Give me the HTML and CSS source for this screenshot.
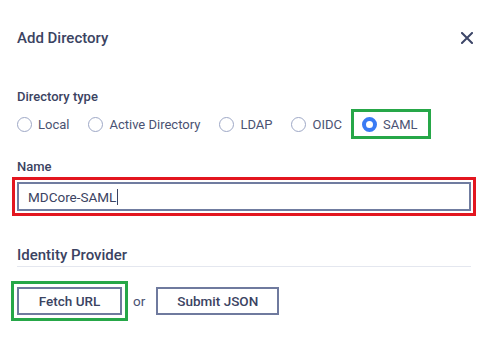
FILE: index.html
```html
<!DOCTYPE html>
<html>
  <head>
    <title>Add Directory</title>
    <link rel="stylesheet" href="styles.css">
  </head>

  <body>
    <div class="dialog">
      <div class="dialog-header">
        <h1 class="dialog-title">Add Directory</h1>
        <button class="close-button" title="Close">
          <svg width="12" height="12" viewBox="0 0 12 12">
            <path d="M1 1 L11 11 M11 1 L1 11" stroke="#3d4668" stroke-width="2" stroke-linecap="square"/>
          </svg>
        </button>
      </div>

      <div class="field-label type-label">Directory type</div>
      <div class="radio-row">
        <label class="radio"><span class="radio-dot"></span>Local</label>
        <label class="radio"><span class="radio-dot"></span>Active Directory</label>
        <label class="radio"><span class="radio-dot"></span>LDAP</label>
        <label class="radio"><span class="radio-dot"></span>OIDC</label>
        <label class="radio radio-selected"><span class="radio-dot checked"></span>SAML</label>
      </div>

      <div class="field-label name-label">Name</div>
      <div class="text-field"><span>MDCore-SAML</span><span class="caret"></span></div>

      <h2 class="section-title">Identity Provider</h2>

      <div class="provider-actions">
        <button class="outline-button fetch-button">Fetch URL</button>
        <span class="or">or</span>
        <button class="outline-button json-button">Submit JSON</button>
      </div>
    </div>
  </body>
</html>
```

FILE: styles.css
```css
* {
  box-sizing: border-box;
}

body {
  margin: 0;
  min-height: 100vh;
  background: #ffffff;
  color: #3b4362;
  font-family: Roboto, 'Liberation Sans', sans-serif;
}

.dialog {
  padding: 28px 14px 24px 17px;
}

.dialog-header {
  display: flex;
  justify-content: space-between;
  align-items: center;
  height: 20px;
}

.dialog-title {
  margin: 0;
  font-size: 15px;
  line-height: 20px;
  font-weight: 500;
}

.close-button {
  border: none;
  background: none;
  padding: 0;
  width: 12px;
  height: 12px;
  display: flex;
  cursor: pointer;
}

.field-label {
  font-size: 13px;
  line-height: 16px;
  font-weight: 500;
}

.type-label {
  margin-top: 41px;
}

.radio-row {
  display: flex;
  align-items: center;
  height: 30px;
  margin-top: 4px;
}

.radio {
  display: flex;
  align-items: center;
  gap: 6px;
  margin-right: 19px;
  font-size: 13px;
  color: #4a5272;
}

.radio-dot {
  width: 15px;
  height: 15px;
  border-radius: 50%;
  border: 1.5px solid #9ea8c6;
  background: #fff;
}

.radio-dot.checked {
  border: 4.5px solid #3a7bf4;
}

.radio-selected {
  height: 30px;
  margin-left: -10px;
  padding: 0 10px 0 8px;
  border: 3px solid #26a748;
}

.name-label {
  margin-top: 20px;
}

.text-field {
  display: flex;
  align-items: center;
  margin-top: 7px;
  height: 29px;
  width: 454px;
  padding-left: 9px;
  border: 2px solid #707ca0;
  outline: 3px solid #e3161f;
  outline-offset: 2px;
  font-size: 13.5px;
  color: #3b4362;
}

.caret {
  width: 1px;
  height: 16px;
  background: #3b4362;
  margin-left: 1px;
}

.section-title {
  margin: 34px 0 0;
  padding-bottom: 1px;
  width: 454px;
  font-size: 15px;
  line-height: 20px;
  font-weight: 500;
  border-bottom: 1px solid #e4e7ef;
}

.provider-actions {
  display: flex;
  align-items: center;
  gap: 11px;
  margin-top: 20px;
}

.outline-button {
  height: 28px;
  padding: 0;
  white-space: nowrap;
  border: 2px solid #6f7a9e;
  background: #fff;
  color: #3b4362;
  font-family: inherit;
  font-size: 13.5px;
  font-weight: 500;
  cursor: pointer;
}

.fetch-button {
  width: 105px;
  outline: 3px solid #26a748;
  outline-offset: 3px;
}

.json-button {
  width: 123px;
}

.or {
  font-size: 13.5px;
  color: #4a5272;
}
```
